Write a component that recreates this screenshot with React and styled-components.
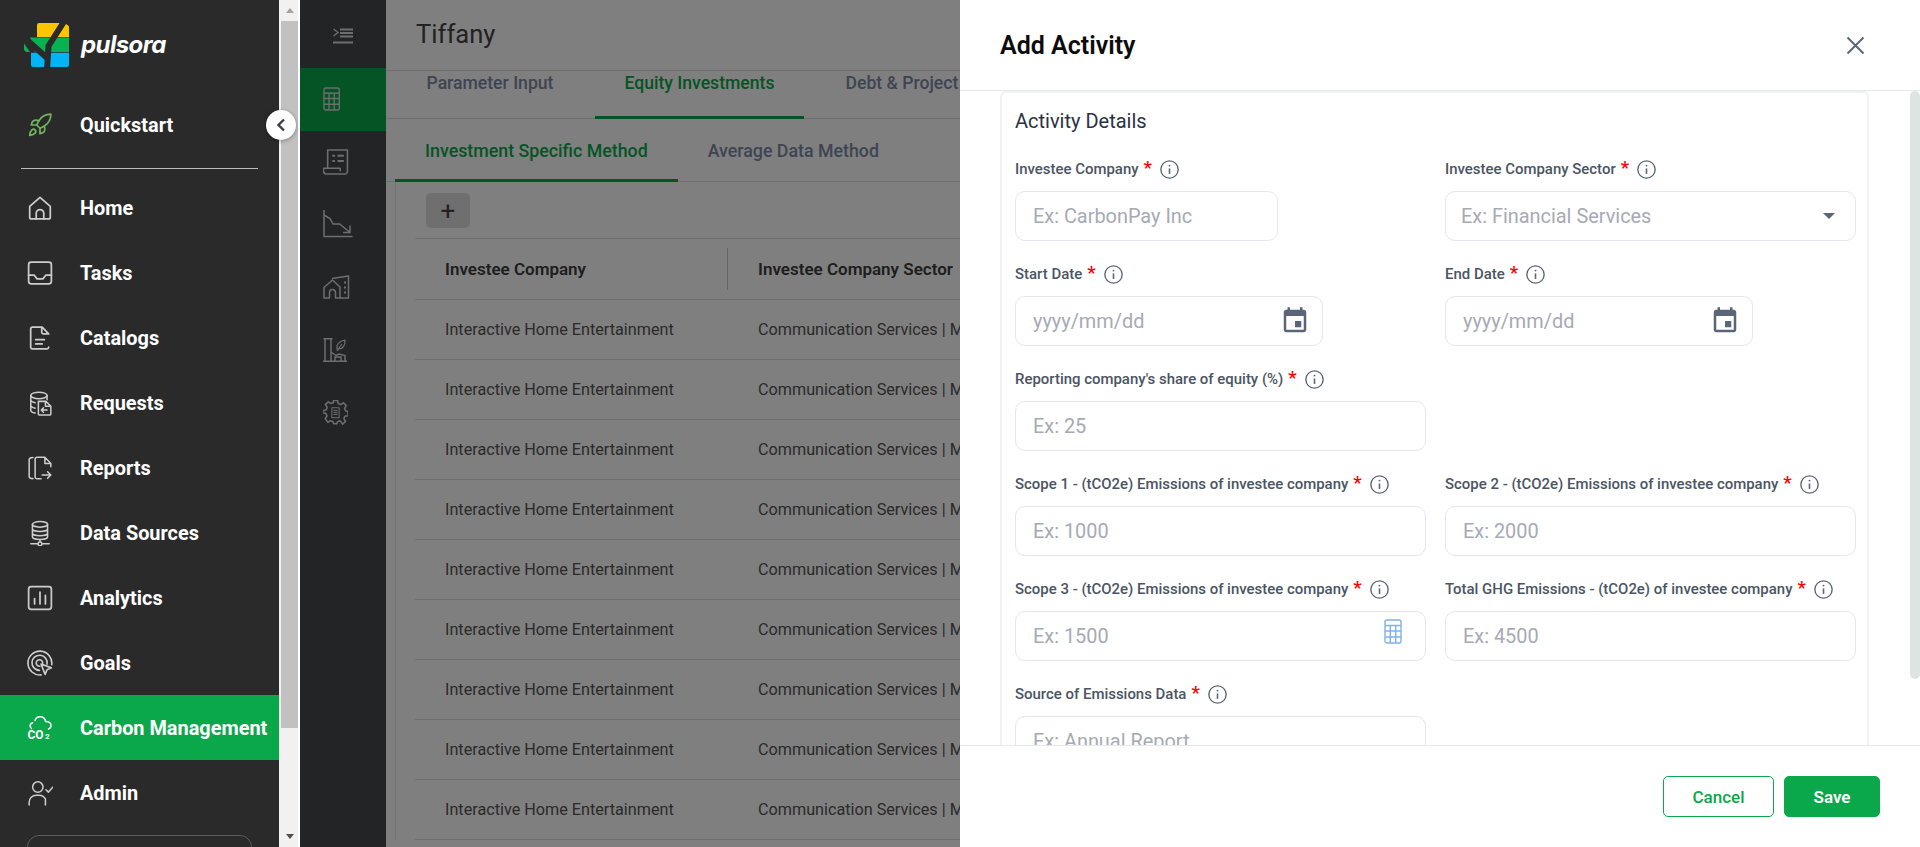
import React from "react";
import styled, { createGlobalStyle } from "styled-components";
import { Rocket } from "lucide-react";

const GlobalStyle = createGlobalStyle`
  html, body {
    margin: 0;
    height: 100%;
    overflow: hidden;
    font-family: Roboto, "Liberation Sans", sans-serif;
  }
  * { box-sizing: border-box; }
`;

const Line = ({ size = 26, children, width = 1.6 }) => (
  <svg width={size} height={size} viewBox="0 0 24 24" fill="none" stroke="currentColor" strokeWidth={width} strokeLinecap="round" strokeLinejoin="round">
    {children}
  </svg>
);

const HomeIcon = () => (
  <Line><path d="M2.5 10.5 12 2.2l9.5 8.3v10a1.6 1.6 0 0 1-1.6 1.6H4.1a1.6 1.6 0 0 1-1.6-1.6z" /><path d="M8.5 22v-5a3.5 3.5 0 0 1 7 0v5" /></Line>
);
const TasksIcon = () => (
  <Line><rect x="1.5" y="2" width="21" height="20" rx="2.4" /><path d="M1.5 14h5.2l2.6 3.4h5.4l2.6-3.4h5.2" /></Line>
);
const CatalogIcon = () => (
  <Line><path d="M5 2h9l6 6.2M20 8.2h-5a1.4 1.4 0 0 1-1.4-1.4V2M5 2a1.6 1.6 0 0 0-1.6 1.6v17A1.6 1.6 0 0 0 5 22h13.5a1.5 1.5 0 0 0 1.5-1.5" /><path d="M8 13.5h8M8 17.5h6" /></Line>
);
const RequestsIcon = () => (
  <Line width={1.4}>
    <path d="M3.5 5c0-1.6 3.5-3 7.5-3s7.5 1.4 7.5 3-3.500 3-7.500 3-7.500-1.400-7.500-3z" />
    <path d="M3.500 5v14c0 1 1.200 1.800 4 2.300M18.500 5v4" />
    <path d="M3.500 10c1 1 2.500 1.500 4 1.800M3.500 15c1 1 2.500 1.500 4 1.800" />
    <path d="M10.500 10.500h7l4.500 4.500v7.200a.8.8 0 0 1-.8.800H11.300a.8.8 0 0 1-.8-.8zM17 10.500V15h5M18.500 18.500h-5M15.200 16.500l-2 2 2 2" />
  </Line>
);
const ReportsIcon = () => (
  <Line width={1.4}>
    <path d="M5.500 2.200C3.500 2.200 2 3 2 4.500v15c0 1.500 1.500 2.300 3.500 2.300" />
    <path d="M13 22H9.300A1.800 1.800 0 0 1 7.500 20.200V3.800A1.800 1.800 0 0 1 9.300 2h7.200l5.500 5.800v3M16.500 2v5.800H22" />
    <path d="M14 18.500h8M19 15.500l3 3-3 3" />
  </Line>
);
const DataIcon = () => (
  <Line width={1.4}>
    <ellipse cx="12" cy="4" rx="7" ry="2.600" />
    <path d="M5 4v11.500c0 1.400 3.100 2.600 7 2.600s7-1.200 7-2.600V4M5 8c0 1.400 3.100 2.600 7 2.600S19 9.400 19 8M5 12c0 1.400 3.100 2.600 7 2.600s7-1.200 7-2.600" />
    <path d="M12 18v2M3.500 22H10M14 22h6.500" /><circle cx="12" cy="22" r="1.800" />
  </Line>
);
const AnalyticsIcon = () => (
  <Line><rect x="1.500" y="1.500" width="21" height="21" rx="2.400" /><path d="M7 17.500v-5M12 17.500V6.500M17 17.500v-8" /></Line>
);
const GoalsIcon = () => (
  <Line width={1.5}>
    <path d="M22.800 13.500A11 11 0 1 0 13 23" />
    <path d="M18.500 13A7 7 0 1 0 11.500 18.800" />
    <path d="M14.500 12.200A3 3 0 1 0 11.800 15" />
    <path d="m13 13 9.500 3.500-4 1.700-1.800 4.300z" />
  </Line>
);
const CarbonIcon = () => (
  <svg width="26" height="26" viewBox="0 0 26 26" fill="none" stroke="currentColor" strokeWidth="1.500" strokeLinecap="round" strokeLinejoin="round" style={{ overflow: "visible" }}>
    <path d="M4.500 13.500a3.200 3.200 0 0 1 1.200-5.800M8 5.500c.8-2.500 3-4 5.500-3.800 3 .2 4.800 2.500 5 4.800 3-.3 5.500 1.500 5.500 4 0 1.700-1 3-2.500 3.500" />
    <text x="0.500" y="24" fontFamily="Roboto, sans-serif" fontWeight="700" fontSize="12" fill="currentColor" stroke="none">CO</text>
    <text x="18" y="24" fontFamily="Roboto, sans-serif" fontWeight="700" fontSize="8" fill="currentColor" stroke="none">2</text>
  </svg>
);
const AdminIcon = () => (
  <Line width={1.4}>
    <circle cx="10" cy="6.500" r="4.800" />
    <path d="M2 23v-2.500a6.500 6.500 0 0 1 6.500-6.500h3a6.500 6.500 0 0 1 5.500 3.500v5.500" />
    <path d="m17.500 9 2.200 2.200 4-4.500" />
  </Line>
);

const RailToggleIcon = () => (
  <svg width="20" height="16" viewBox="0 0 20 16" fill="none" stroke="#dcdcdc" strokeWidth="2">
    <path d="M0.500 1 5 4.500 0.500 8" strokeWidth="1.300" />
    <path d="M7 1.500h13M7 5h13M7 8.500h13M0 14.500h20" />
  </svg>
);
const CalcGrid = ({ size = 24, color = "#dcdcdc" }) => (
  <svg width={size * 0.72} height={size} viewBox="0 0 18 25" fill="none" stroke={color} strokeWidth="1.400">
    <rect x="1" y="1" width="16" height="23" rx="2" />
    <path d="M1 6.500h16M1 12h16M1 18h16M6.300 6.500V24M11.700 6.500V24" />
  </svg>
);
const ScrollDocIcon = () => (
  <svg width="26" height="26" viewBox="0 0 25 25" fill="none" stroke="#dcdcdc" strokeWidth="1.500" strokeLinejoin="round">
    <path d="M4.500 18.500V1h19v20.500a2.500 2.500 0 0 1-2.500 2.500H3a2.500 2.500 0 0 1-2.500-2.500v-3h16v3" />
    <path d="M9 6.500h2.500M14 6.500h6M9 11.500h2.500M14 11.500h6" strokeWidth="2" />
  </svg>
);
const ChartDownIcon = () => (
  <svg width="30" height="28" viewBox="0 0 30 28" fill="none" stroke="#dcdcdc" strokeWidth="1.500">
    <path d="M1 0v26.500h28.500" />
    <path d="M1 5l6 3.500 3 5.500h6.500l10 8M27 15.500v7h-7" />
  </svg>
);
const HouseBlockIcon = () => (
  <svg width="27" height="24" viewBox="0 0 27 24" fill="none" stroke="#dcdcdc" strokeWidth="1.500" strokeLinejoin="round">
    <path d="M1 23V12.500L9.500 5 17 12v11h-4.500v-5.500a3 3 0 0 0-6 0V23z" />
    <path d="M9 3.500 25.500 1v22H17" />
    <path d="M21 7.500h2M21 12.500h2M21 17.500h2" strokeWidth="2" />
  </svg>
);
const FactoryLeafIcon = () => (
  <svg width="25" height="24" viewBox="0 0 25 24" fill="none" stroke="#dcdcdc" strokeWidth="1.500">
    <path d="M0 23.300h24M2 23V.8h6V23M.5.800h9M8 14l5 3.500 3-1.500 6 1.500V23M12 23v-4h6v4" />
    <path d="M14 11c-1-4 2-8 8-9 0 5-2 9-6 9zM14 13l5-7" strokeWidth="1.200" />
  </svg>
);
const GearCalcIcon = () => (
  <svg width="25" height="25" viewBox="0 0 24 24" fill="none" stroke="#dcdcdc" strokeWidth="1.500" strokeLinejoin="round">
    <path d="M10 1h4l.6 3 2.500 1 2.500-1.700 2.800 2.800L20.700 8.600l1 2.500 2.300.9v4l-3 .6-1 2.500 1.700 2.500-2.800 2.800L16.400 21l-2.500 1-.6 2h-3l-.6-2-2.500-1-2.500 1.700L2.100 18.900 3.800 16.400l-1-2.500-2.800-.9v-2l3-.6 1-2.500L2.300 5.100l2.800-2.800L7.600 4l2.500-1z" transform="translate(0 -.5) scale(1 .97)" />
    <path d="M8.500 7.500h7v9.500h-7zM10 10h4M10 12h4M10 14h4" strokeWidth="1" />
  </svg>
);

const InfoIcon = () => (
  <svg width="19" height="19" viewBox="0 0 18 18" fill="none" stroke="#5b6579" strokeWidth="1.300">
    <circle cx="9" cy="9" r="8.200" />
    <path d="M9 8v5.200" strokeWidth="1.500" />
    <circle cx="9" cy="5.300" r=".9" fill="#5b6579" stroke="none" />
  </svg>
);
const EventIcon = () => (
  <svg width="30" height="30" viewBox="0 0 24 24" fill="#5b6579">
    <path d="M17 12h-5v5h5v-5zM16 1v2H8V1H6v2H5c-1.110 0-1.990.9-1.990 2L3 19c0 1.100.89 2 2 2h14c1.100 0 2-.9 2-2V5c0-1.100-.9-2-2-2h-1V1h-2zm3 18H5V8h14v11z" />
  </svg>
);

const LogoMark = () => (
  <svg width="45" height="45" viewBox="0 0 45 45">
    <path d="M15 1h24a4 4 0 0 1 4 0l2 0v14H13V3a2 2 0 0 1 2-2z" fill="#fdc500" />
    <path d="M6 15.500h39V30H11zM0 21.500l6 8.500H2l-2-2z" fill="#07b351" />
    <path d="M7 30.800h38V43a2 2 0 0 1-2 2H9a2 2 0 0 1-2-2z" fill="#00b4f5" />
    <path d="M41 -2 24.500 24 23 48M-2 13.500 23 36" fill="none" stroke="#2a2a2a" strokeWidth="6" />
    <path d="M39.500 0h6v4.500z" fill="#2a2a2a" />
  </svg>
);

const Page = styled.div`
  position: relative;
  display: flex;
  width: 1920px;
  height: 847px;
  overflow: hidden;
  background: #fff;
`;

const Sidebar = styled.aside`
  width: 279px;
  flex: none;
  background: #2a2a2a;
  overflow: hidden;
`;

const LogoBar = styled.div`
  display: flex;
  align-items: flex-start;
  height: 92px;
  padding: 22px 0 0 24px;
`;

const LogoText = styled.span`
  margin: 9px 0 0 12px;
  color: #fff;
  font-family: Inter, sans-serif;
  font-size: 24px;
  font-style: italic;
  font-weight: 700;
  line-height: 28px;
  letter-spacing: -0.6px;
`;

const NavItem = styled.div`
  display: flex;
  align-items: center;
  height: 65px;
  padding: 1px 0 0 27px;
  gap: 27px;
  color: #fff;
  font-size: 19.900px;
  font-weight: 700;
  white-space: nowrap;
  background: ${(p) => (p.$active ? "#0aa84a" : "transparent")};

  svg {
    flex: none;
    color: ${(p) => (p.$active ? "#fff" : p.$tint || "#cdcdcd")};
  }
`;

const NavDivider = styled.div`
  height: 1px;
  margin: 11px 21px 6px;
  background: #bdbdbd;
`;

const NavBox = styled.div`
  height: 60px;
  margin: 10px 27px 0;
  border: 1px solid #5c5c5c;
  border-radius: 12px;
`;

const ScrollTrack = styled.div`
  display: flex;
  flex-direction: column;
  width: 21px;
  flex: none;
  background: #f1f1f1;
  border-right: 2px solid #fff;
`;

const ScrollArrow = styled.div`
  display: flex;
  justify-content: center;
  align-items: center;
  height: 21px;
  flex: none;
  padding-left: 2px;

  &::before {
    content: "";
    border-left: 4.500px solid transparent;
    border-right: 4.500px solid transparent;
    border-${(p) => (p.$down ? "top" : "bottom")}: 5px solid ${(p) => (p.$down ? "#505050" : "#a3a3a3")};
  }
`;

const ScrollThumb = styled.div`
  height: 707px;
  margin-left: 2px;
  background: #c1c1c1;
`;

const ScrollGap = styled.div`
  flex: 1;
`;

const Rail = styled.nav`
  width: 86px;
  flex: none;
  background: #46494d;
`;

const RailToggle = styled.div`
  display: flex;
  justify-content: center;
  align-items: center;
  height: 68px;
  padding-top: 3px;
`;

const RailItem = styled.div`
  display: flex;
  align-items: center;
  height: 62.600px;
  padding-left: 23px;
  background: ${(p) => (p.$active ? "#0aa84a" : "transparent")};
`;

const Main = styled.main`
  flex: 1;
  min-width: 0;
  overflow: hidden;
  background: #fff;
`;

const MainHeader = styled.header`
  height: 71px;
  padding: 20px 0 0 30px;
  border-bottom: 1px solid #dedede;
  color: #444;
  font-size: 25.600px;
  line-height: 28px;
`;

const TabBar = styled.div`
  display: flex;
  gap: ${(p) => p.$gap}px;
  height: ${(p) => p.$height}px;
  padding-left: ${(p) => p.$inset}px;
  border-bottom: 1px solid #dedede;
  white-space: nowrap;
`;

const Tab = styled.div`
  height: 48px;
  padding: 0 29.500px;
  border-bottom: 3px solid ${(p) => (p.$active ? "#0aa84a" : "transparent")};
  color: ${(p) => (p.$active ? "#0aa84a" : "#7c8aa5")};
  font-size: 17.600px;
  font-weight: 500;
  line-height: 24px;
`;

const SubTab = styled(Tab)`
  height: 63px;
  padding: 20px 30px 0;
  font-size: 17.800px;
`;

const TableCard = styled.section`
  margin-left: 9px;
  padding-left: 19px;
  border-left: 1px solid #e6e6e6;
`;

const Toolbar = styled.div`
  height: 57px;
  padding: 11px 0 0 11px;
  border-bottom: 1px solid #dedede;
`;

const AddButton = styled.div`
  display: flex;
  justify-content: center;
  align-items: center;
  width: 44px;
  height: 35px;
  border-radius: 5px;
  background: #dedede;
  color: #444;
  font-size: 26px;
  font-weight: 400;
`;

const Row = styled.div`
  display: grid;
  grid-template-columns: 312px 1fr;
  align-items: center;
  height: ${(p) => (p.$head ? "61px" : "60px")};
  border-bottom: 1px solid #dedede;
  color: ${(p) => (p.$head ? "#3c3c3c" : "#555")};
  font-size: ${(p) => (p.$head ? "17px" : "16.200px")};
  font-weight: ${(p) => (p.$head ? 600 : 400)};
  white-space: nowrap;
`;

const Cell = styled.div`
  padding-left: ${(p) => p.$inset}px;
`;

const HeadCell = styled(Cell)`
  display: flex;
  align-items: center;
  height: 42px;
  border-left: ${(p) => (p.$sep ? "1px solid #c6c6c6" : "none")};
`;

const Overlay = styled.div`
  position: absolute;
  top: 0;
  bottom: 0;
  left: 300px;
  right: 0;
  background: rgba(0, 0, 0, 0.5);
`;

const CollapseButton = styled.div`
  position: absolute;
  top: 110px;
  left: 266px;
  display: flex;
  justify-content: center;
  align-items: center;
  width: 30px;
  height: 30px;
  border-radius: 50%;
  background: #fff;
  box-shadow: 0 1px 4px rgba(0, 0, 0, 0.35);
  z-index: 2;
`;

const Drawer = styled.div`
  position: absolute;
  top: 0;
  right: 0;
  bottom: 0;
  display: flex;
  flex-direction: column;
  width: 960px;
  background: #fff;
`;

const DrawerHeader = styled.header`
  display: flex;
  justify-content: space-between;
  align-items: center;
  height: 91px;
  flex: none;
  padding: 0 55px 0 40px;
  border-bottom: 1px solid #e5e7eb;
`;

const DrawerTitle = styled.h2`
  margin: 0;
  color: #0c0c0c;
  font-size: 25px;
  font-weight: 600;
`;

const DrawerBody = styled.div`
  position: relative;
  flex: 1;
  min-height: 0;
  overflow: hidden;
  padding: 0 51px 0 40px;
`;

const DrawerThumb = styled.div`
  position: absolute;
  top: 0;
  right: 0;
  width: 10px;
  height: 588px;
  border-radius: 5px;
  background: #dee4e1;
`;

const DetailsCard = styled.section`
  padding: 16px 11px 30px 13px;
  border: 2px solid #f0f1f3;
  border-radius: 6px;
`;

const CardTitle = styled.h3`
  margin: 0 0 25px;
  color: #2b3244;
  font-size: 20px;
  font-weight: 400;
  line-height: 24px;
`;

const FieldGrid = styled.div`
  display: grid;
  grid-template-columns: 411px 411px;
  column-gap: 19px;
  row-gap: 22px;
`;

const Field = styled.div`
  grid-column: ${(p) => (p.$alone ? "1 / -1" : "auto")};
`;

const LabelRow = styled.div`
  display: flex;
  align-items: center;
  height: 22px;
  margin-bottom: 11px;
  color: #4b5563;
  font-size: 14.950px;
  font-weight: 500;
  white-space: nowrap;
`;

const Star = styled.span`
  margin: 0 8px 0 5px;
  color: #ff0000;
  font-size: 19px;
  line-height: 18px;
  transform: translateY(-1px);
`;

const InputWrap = styled.div`
  position: relative;
  width: ${(p) => p.$width || 411}px;
`;

const TextInput = styled.input`
  display: block;
  width: 100%;
  height: 50px;
  padding: 0 16px 0 ${(p) => p.$left}px;
  border: 1px solid #e4e7ee;
  border-radius: 10px;
  outline: none;
  background: #fff;
  font-family: Roboto, sans-serif;
  font-size: 19.900px;

  &::placeholder {
    color: #a6aab4;
    opacity: 1;
  }
`;

const Caret = styled.span`
  position: absolute;
  top: 22px;
  right: 21px;
  border-left: 6.500px solid transparent;
  border-right: 6.500px solid transparent;
  border-top: 6px solid #5b6579;
`;

const EndIcon = styled.span`
  position: absolute;
  top: ${(p) => p.$top}px;
  right: ${(p) => p.$right}px;
  display: flex;
`;

const DrawerFooter = styled.footer`
  display: flex;
  justify-content: flex-end;
  gap: 10px;
  height: 102px;
  flex: none;
  padding: 30px 40px 0 0;
  border-top: 1px solid #e5e7eb;
`;

const Button = styled.button`
  width: ${(p) => p.$width}px;
  height: 41px;
  border: 1px solid #0aa84a;
  border-radius: 5px;
  background: ${(p) => (p.$primary ? "#0aa84a" : "#fff")};
  color: ${(p) => (p.$primary ? "#fff" : "#0aa84a")};
  font-family: Roboto, sans-serif;
  font-size: 17px;
  font-weight: ${(p) => (p.$primary ? 600 : 500)};
`;

const navItems = [
  ["Home", HomeIcon],
  ["Tasks", TasksIcon],
  ["Catalogs", CatalogIcon],
  ["Requests", RequestsIcon],
  ["Reports", ReportsIcon],
  ["Data Sources", DataIcon],
  ["Analytics", AnalyticsIcon],
  ["Goals", GoalsIcon],
  ["Carbon Management", CarbonIcon, true],
  ["Admin", AdminIcon],
];

const railIcons = [ScrollDocIcon, ChartDownIcon, HouseBlockIcon, FactoryLeafIcon, GearCalcIcon];

const fields = [
  { label: "Investee Company", placeholder: "Ex: CarbonPay Inc", width: 263 },
  { label: "Investee Company Sector", placeholder: "Ex: Financial Services", select: true },
  { label: "Start Date", placeholder: "yyyy/mm/dd", width: 308, date: true },
  { label: "End Date", placeholder: "yyyy/mm/dd", width: 308, date: true },
  { label: "Reporting company's share of equity (%)", placeholder: "Ex: 25", alone: true },
  { label: "Scope 1 - (tCO2e) Emissions of investee company", placeholder: "Ex: 1000" },
  { label: "Scope 2 - (tCO2e) Emissions of investee company", placeholder: "Ex: 2000" },
  { label: "Scope 3 - (tCO2e) Emissions of investee company", placeholder: "Ex: 1500", calc: true },
  { label: "Total GHG Emissions - (tCO2e) of investee company", placeholder: "Ex: 4500" },
  { label: "Source of Emissions Data", placeholder: "Ex: Annual Report", alone: true },
];

const App = () => {
  return (
    <Page>
      <GlobalStyle />
      <Sidebar>
        <LogoBar>
          <LogoMark />
          <LogoText>pulsora</LogoText>
        </LogoBar>
        <NavItem $tint="#72b35f">
          <Rocket size={26} strokeWidth={1.6} />
          Quickstart
        </NavItem>
        <NavDivider />
        {navItems.map(([label, Icon, active]) => (
          <NavItem key={label} $active={active}>
            <Icon />
            {label}
          </NavItem>
        ))}
        <NavBox />
      </Sidebar>
      <ScrollTrack>
        <ScrollArrow />
        <ScrollThumb />
        <ScrollGap />
        <ScrollArrow $down />
      </ScrollTrack>
      <Rail>
        <RailToggle>
          <RailToggleIcon />
        </RailToggle>
        <RailItem $active>
          <CalcGrid />
        </RailItem>
        {railIcons.map((Icon, idx) => (
          <RailItem key={idx}>
            <Icon />
          </RailItem>
        ))}
      </Rail>
      <Main>
        <MainHeader>Tiffany</MainHeader>
        <TabBar $gap={12} $height={48} $inset={11}>
          <Tab>Parameter Input</Tab>
          <Tab $active>Equity Investments</Tab>
          <Tab>Debt &amp; Project Finance</Tab>
        </TabBar>
        <TabBar $gap={0} $height={63} $inset={9}>
          <SubTab $active>Investment Specific Method</SubTab>
          <SubTab>Average Data Method</SubTab>
        </TabBar>
        <TableCard>
          <Toolbar>
            <AddButton>+</AddButton>
          </Toolbar>
          <Row $head>
            <HeadCell $inset={30}>Investee Company</HeadCell>
            <HeadCell $inset={30} $sep>Investee Company Sector</HeadCell>
          </Row>
          {Array.from({ length: 9 }).map((_, idx) => (
            <Row key={idx}>
              <Cell $inset={30}>Interactive Home Entertainment</Cell>
              <Cell $inset={31}>Communication Services | Media</Cell>
            </Row>
          ))}
        </TableCard>
      </Main>
      <Overlay />
      <CollapseButton>
        <svg width="12" height="14" viewBox="0 0 12 14" fill="none" stroke="#3a3f47" strokeWidth="2.400">
          <path d="M9 1.500 3.500 7 9 12.500" />
        </svg>
      </CollapseButton>
      <Drawer>
        <DrawerHeader>
          <DrawerTitle>Add Activity</DrawerTitle>
          <svg width="19" height="19" viewBox="0 0 19 19" stroke="#5b6579" strokeWidth="2">
            <path d="M1.500 1.500l16 16M17.500 1.500l-16 16" />
          </svg>
        </DrawerHeader>
        <DrawerBody>
          <DetailsCard>
            <CardTitle>Activity Details</CardTitle>
            <FieldGrid>
              {fields.map((f) => (
                <Field key={f.label} $alone={f.alone}>
                  <LabelRow>
                    {f.label}
                    <Star>*</Star>
                    <InfoIcon />
                  </LabelRow>
                  <InputWrap $width={f.width}>
                    <TextInput readOnly placeholder={f.placeholder} $left={f.select ? 15 : 17} />
                    {f.select && <Caret />}
                    {f.date && (
                      <EndIcon $top={10} $right={13}>
                        <EventIcon />
                      </EndIcon>
                    )}
                    {f.calc && (
                      <EndIcon $top={8} $right={24}>
                        <CalcGrid size={25} color="#7fb2e8" />
                      </EndIcon>
                    )}
                  </InputWrap>
                </Field>
              ))}
            </FieldGrid>
          </DetailsCard>
          <DrawerThumb />
        </DrawerBody>
        <DrawerFooter>
          <Button $width={111}>Cancel</Button>
          <Button $width={96} $primary>Save</Button>
        </DrawerFooter>
      </Drawer>
    </Page>
  );
};

export default App;
